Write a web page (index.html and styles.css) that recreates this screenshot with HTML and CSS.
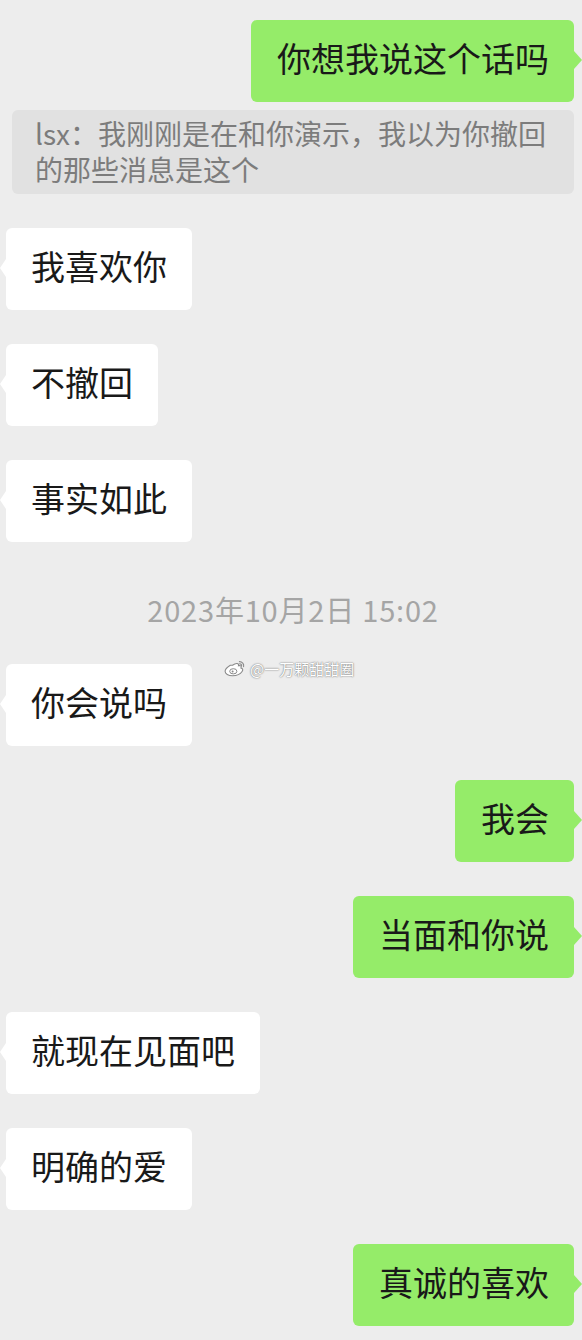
FILE: index.html
```html
<!DOCTYPE html>
<html>
	<head>
		<meta charset="utf-8">
		<title>聊天记录</title>
		<link rel="stylesheet" href="styles.css">
	</head>
	<body>
		<div class="chat">
			<div class="row right"><div class="bubble green">你想我说这个话吗</div></div>
			<div class="quote">lsx：我刚刚是在和你演示，我以为你撤回的那些消息是这个</div>

			<div class="row left"><div class="bubble white">我喜欢你</div></div>
			<div class="row left"><div class="bubble white">不撤回</div></div>
			<div class="row left"><div class="bubble white">事实如此</div></div>

			<div class="time">2023年10月2日 15:02</div>

			<div class="row left after-time"><div class="bubble white">你会说吗</div></div>
			<div class="row right"><div class="bubble green">我会</div></div>
			<div class="row right"><div class="bubble green">当面和你说</div></div>
			<div class="row left"><div class="bubble white">就现在见面吧</div></div>
			<div class="row left"><div class="bubble white">明确的爱</div></div>
			<div class="row right"><div class="bubble green">真诚的喜欢</div></div>

			<!-- watermark -->
			<div class="mark">
				<svg width="22" height="18" viewBox="0 0 22 18">
					<path d="M8.5 5.2c3.6-2.6 6.6-2.2 6 0.6 1.9-0.6 3.4 0.2 2.4 2.1 2 0.6 2.3 2 1.2 3.6-1.6 2.4-5.3 4.2-9.6 4.2-4.2 0-7.4-1.9-7.4-4.4 0-1.9 2.3-4.3 5.2-6.1z" fill="#fff" stroke="#8a8a8a" stroke-width="1.1"/>
					<ellipse cx="9.3" cy="11.3" rx="3.6" ry="2.6" fill="#fff" stroke="#8a8a8a" stroke-width="1"/>
					<circle cx="8.6" cy="11.6" r="1" fill="#8a8a8a"/>
					<path d="M15.4 1.6c2.8 0 4.8 2.3 4.2 5M15.6 3.8c1.4 0 2.2 1 2 2.2" fill="none" stroke="#8a8a8a" stroke-width="1.1" stroke-linecap="round"/>
				</svg>
				<span>@一万颗甜甜圈</span>
			</div>
		</div>
	</body>
</html>
```

FILE: styles.css
```css
html, body {
	margin: 0;
	padding: 0;
	background: #ededed;
}

body {
	font-family: "Noto Sans CJK SC", "Noto Sans", sans-serif;
	color: #191919;
}

.chat {
	position: relative;
	display: flex;
	flex-direction: column;
	padding: 20px 8px 14px 6px;
}

.row {
	display: flex;
	margin-top: 34px;
}

.row:first-child {
	margin-top: 0;
}

.row.right {
	justify-content: flex-end;
}

.row.left {
	justify-content: flex-start;
}

.bubble {
	position: relative;
	font-size: 34px;
	line-height: 42px;
	padding: 17px 25px 23px;
	border-radius: 6px;
	white-space: nowrap;
}

.bubble.green {
	background: #95ec69;
	padding-left: 26px;
}

.bubble.white {
	background: #ffffff;
}

/* little arrows */
.bubble.green::after,
.bubble.white::before {
	content: "";
	position: absolute;
	top: 31px;
	border-top: 9px solid transparent;
	border-bottom: 9px solid transparent;
}

.bubble.green::after {
	right: -8px;
	border-left: 8px solid #95ec69;
}

.bubble.white::before {
	left: -6px;
	border-right: 6px solid #ffffff;
}

.quote {
	margin: 8px 0 0 6px;
	padding: 5px 20px 7px 23px;
	background: #e1e1e1;
	border-radius: 6px;
	color: #7c7c7c;
	font-size: 28px;
	line-height: 36px;
}

.quote + .row {
	margin-top: 34px;
}

.time {
	margin-top: 32px;
	text-align: center;
	color: #a5a5a5;
	font-size: 29px;
	letter-spacing: 0.8px;
	line-height: 70px;
	padding-left: 6px;
}

.row.after-time {
	margin-top: 20px;
}

.mark {
	position: absolute;
	left: 224px;
	top: 658px;
	display: flex;
	align-items: center;
	gap: 4px;
	font-size: 15px;
	color: #ffffff;
	text-shadow: 0 0 1px #777, 0 0 2px #888;
}
```
